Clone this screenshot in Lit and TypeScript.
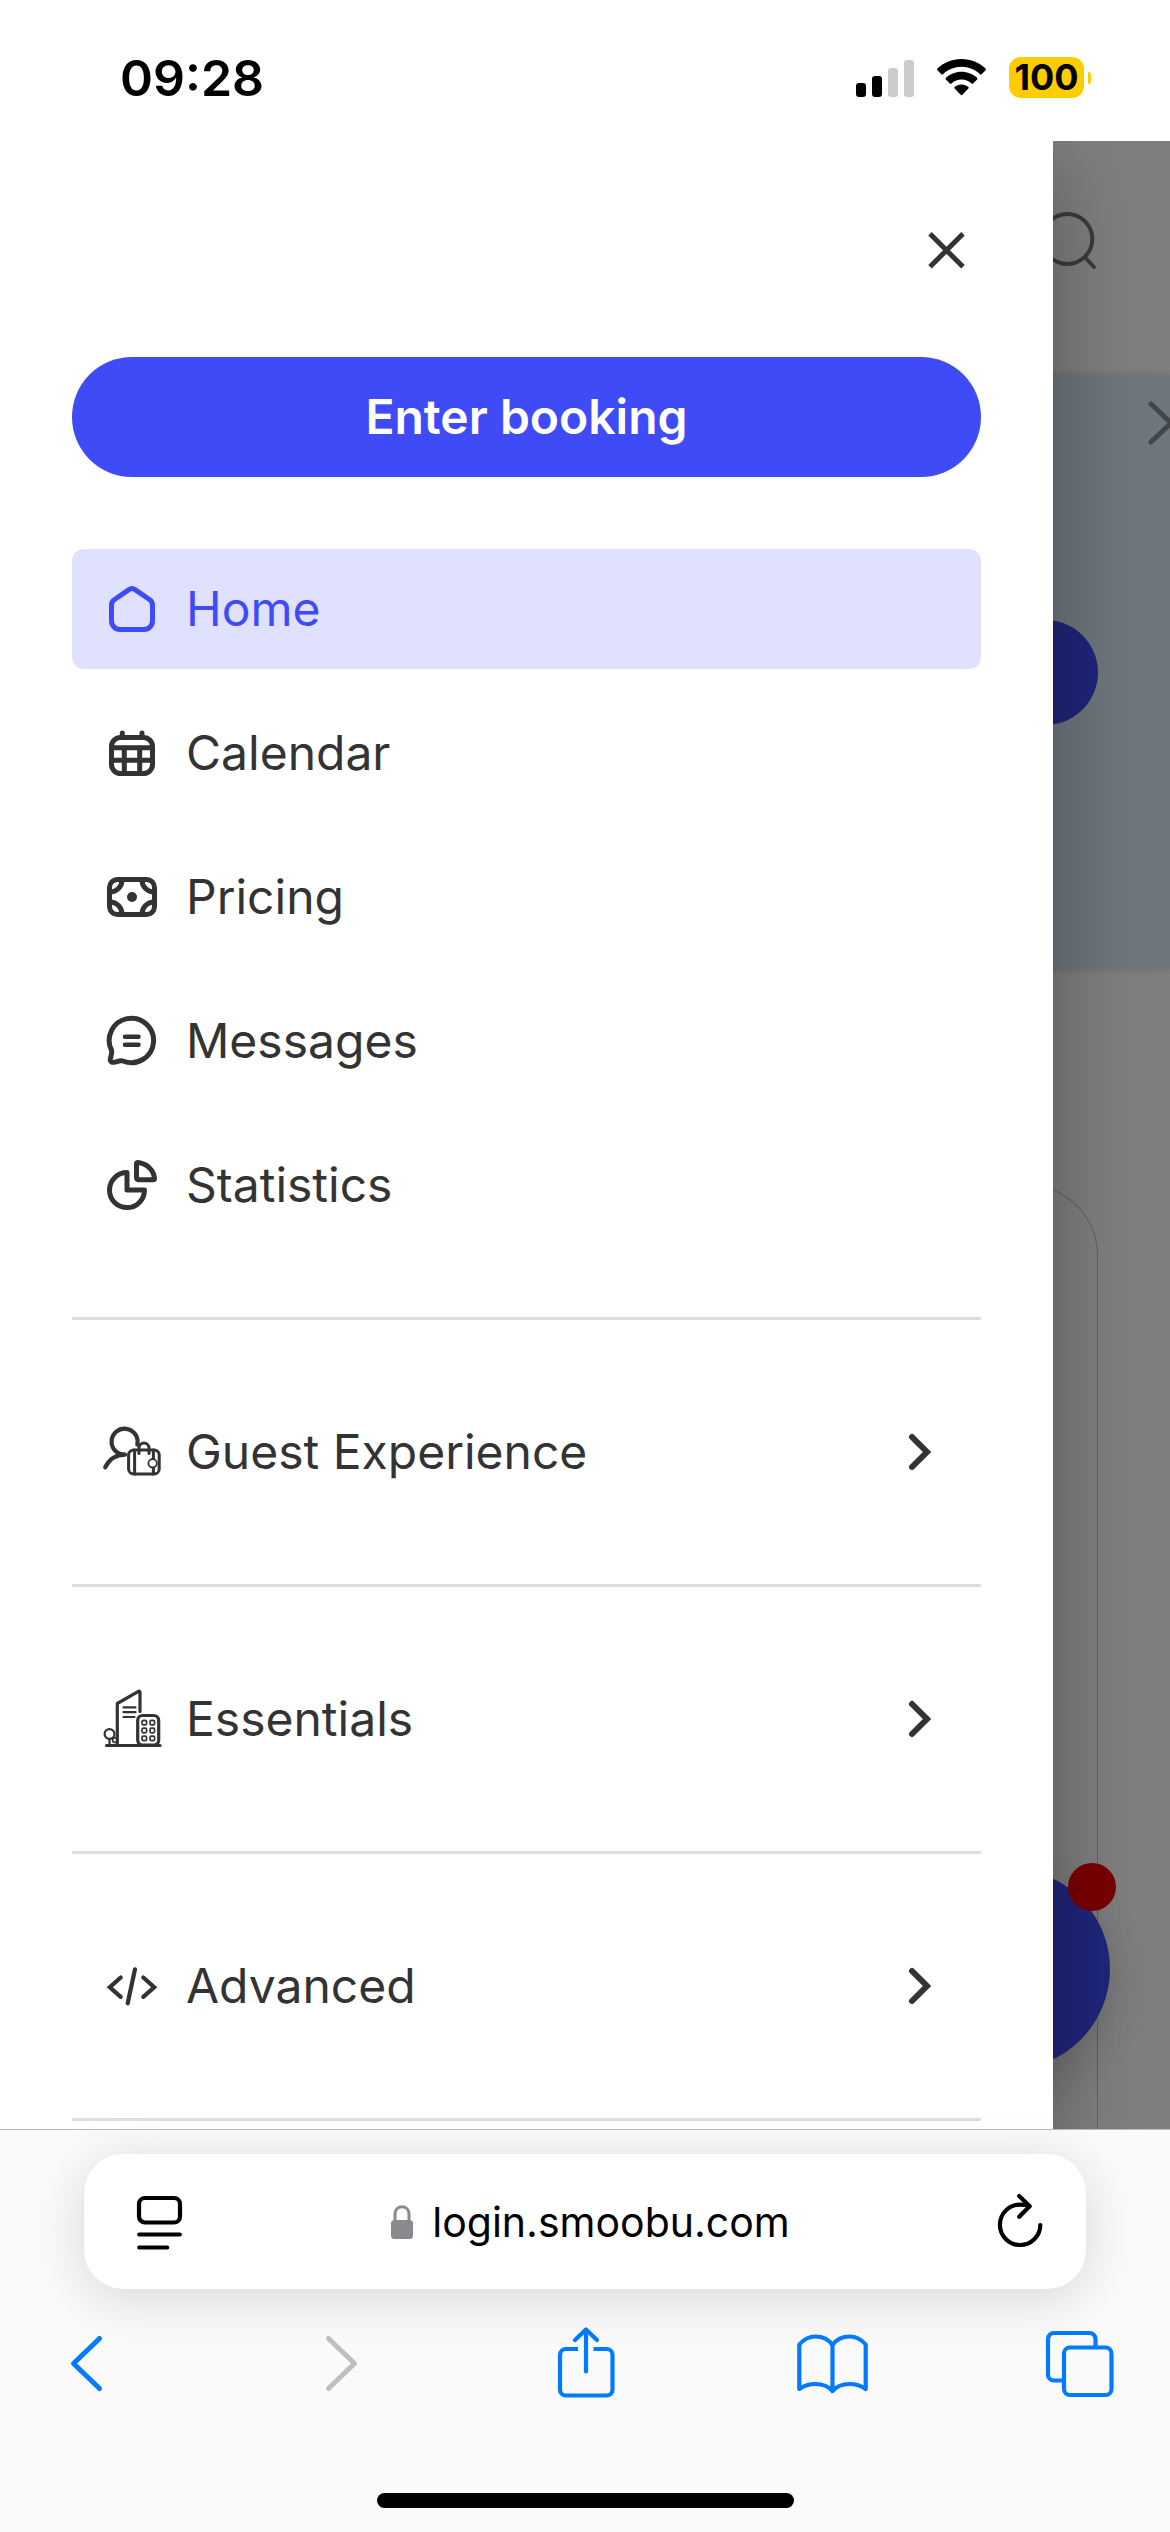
import { LitElement, html, css, svg } from "lit";
import type { SVGTemplateResult } from "lit";
import { customElement, property, state } from "lit/decorators.js";
import { classMap } from "lit/directives/class-map.js";

const menuIcons: Record<string, SVGTemplateResult> = {
  home: svg`<path stroke-width="5" d="M27 10.6a5 5 0 0 1 6 0L47.5 20.5a6.500 6.500 0 0 1 3 5.500V42a8.500 8.500 0 0 1-8.500 8.500H18A8.500 8.500 0 0 1 9.500 42V26a6.500 6.500 0 0 1 3-5.500Z"/>`,
  calendar: svg`<g stroke-width="5"><rect x="9.5" y="14.5" width="41" height="36" rx="9"/>
    <path d="M20.300 10v4M40 10v4M10 24.700h40M10 37.300h40M22.300 25v25M37.700 25v25"/></g>`,
  pricing: svg`<g stroke-width="5"><rect x="7.5" y="12.5" width="45" height="35" rx="8"/>
    <path d="M20 13a12 12 0 0 1-12 12M40 13a12 12 0 0 0 12 12M20 47a12 12 0 0 0-12-12M40 47a12 12 0 0 1 12-12"/></g>
    <circle cx="30" cy="30" r="5" fill="currentColor" stroke="none"/>`,
  messages: svg`<path stroke-width="5" d="M21 50c-2.500-1-4-.2-7 .9-4.200 1.200-6.500 0-5.500-3.700.6-2.500 1.500-4.400 1.100-7.700A22.200 22.200 0 1 1 21 50Z"/>
    <path stroke-width="4.600" d="M23 25.700h13.500M23 33.700h13.500"/>`,
  statistics: svg`<path stroke-width="5" d="M34.500 8.800c0-1 .6-1.500 1.500-1.300C45 8.500 51.700 15 52.500 23.500c0 .8-.4 1.300-1.200 1.300H36.500a2 2 0 0 1-2-2Z"/>
    <path stroke-width="5" d="M25 17.600A17.500 17.500 0 1 0 42.500 35H25Z"/>`,
  guest: svg`<path stroke-width="4.200" d="M35.300 22.500A13 13 0 1 0 23 32.700C14 32.700 7 38 3.200 45.300"/>
    <g stroke-width="3"><rect x="26.6" y="28" width="30.600" height="24" rx="5"/>
    <path d="M32.600 28v24M37 31.500V26a5 5 0 0 1 10 0v5.500M51.400 28v24" /></g>
    <circle cx="50.600" cy="41.300" r="4.200" stroke-width="1.800" fill="#fff"/>`,
  essentials: svg`<g stroke-width="3.200"><path d="M15.300 56V14.500L36.500 2.300q1.500-.6 1.500 1V22.500"/>
    <path d="M4.500 56.500h53.500"/><rect x="35.700" y="26.500" width="21" height="29.500" rx="5"/></g>
    <path stroke-width="2.200" d="M21.500 18.300h12M21.500 23.200h12M21.500 28h11"/>
    <g stroke-width="1.700"><rect x="40" y="31.300" width="4.600" height="4.600" rx="1.500"/><rect x="48" y="31.300" width="4.600" height="4.600" rx="1.500"/>
    <rect x="40" y="39.200" width="4.600" height="4.600" rx="1.500"/><rect x="48" y="39.200" width="4.600" height="4.600" rx="1.500"/>
    <rect x="40" y="47.100" width="4.600" height="4.600" rx="1.500"/><rect x="48" y="47.100" width="4.600" height="4.600" rx="1.500"/>
    <circle cx="13" cy="51" r="2.400"/></g>
    <g stroke-width="2.200"><circle cx="7.500" cy="45" r="4.900" fill="#fff"/><path d="M7.500 50v6"/></g>`,
  advanced: svg`<path stroke-width="4.200" stroke-linejoin="miter" d="M18.700 21.500 7.800 31.300l10.900 9.500M41.300 21.500l10.900 9.800-10.900 9.500M33 13.300l-7.300 34"/>`,
};

const toolbarIcons: Record<string, SVGTemplateResult> = {
  back: svg`<path stroke-width="5" d="M48.500 13.500 22.500 38.500l26 25"/>`,
  forward: svg`<path stroke-width="5" d="M29.500 13.500l26 25-26 25"/>`,
  share: svg`<path stroke-linecap="butt" d="M30 24H18a6 6 0 0 0-6 6v34.500a6 6 0 0 0 6 6h40.500a6 6 0 0 0 6-6V30a6 6 0 0 0-6-6h-13"/>
    <path d="M38 46.500V4.500M27 15 38 4.500 49 15"/>`,
  book: svg`<path d="M3.300 19.500V64c4.700-3.400 9.700-5 16.200-5 7.500 0 13.500 3 17 7 3.500-4 9.500-7 17-7 6.500 0 11.500 1.600 16.200 5V19.500c-4.700-5.500-9.700-8-16.200-8-7.500 0-13.500 3.500-17 8.500-3.500-5-9.500-8.500-17-8.500-6.500 0-11.500 2.500-16.200 8ZM36.500 20v45"/>`,
  tabs: svg`<path stroke-linecap="butt" d="M51.500 22v-8a6 6 0 0 0-6-6H10a6 6 0 0 0-6 6v35.500a6 6 0 0 0 6 6h9"/>
    <rect x="20" y="22.500" width="47.500" height="47.500" rx="6"/>`,
};

interface MenuEntry {
  id: string;
  label: string;
}

const primary: MenuEntry[] = [
  { id: "home", label: "Home" },
  { id: "calendar", label: "Calendar" },
  { id: "pricing", label: "Pricing" },
  { id: "messages", label: "Messages" },
  { id: "statistics", label: "Statistics" },
];

const groups: MenuEntry[] = [
  { id: "guest", label: "Guest Experience" },
  { id: "essentials", label: "Essentials" },
  { id: "advanced", label: "Advanced" },
];

const reset = css`
  :host, *, *::before, *::after { box-sizing: border-box; }
  button { margin: 0; padding: 0; border: 0; background: none; color: inherit; font: inherit; cursor: pointer; }
  svg { display: block; flex: none; fill: none; stroke: currentColor; stroke-linecap: round; stroke-linejoin: round; overflow: visible; }
`;

@customElement("status-bar")
export class StatusBar extends LitElement {
  static styles = [reset, css`
    :host {
      display: flex; align-items: center; justify-content: space-between;
      height: 141px; padding: 14px 79px 0 120px;
      background: #fff; color: #000;
      font-family: Inter, "Liberation Sans", sans-serif;
    }
    .time { font-size: 50px; line-height: 60px; font-weight: 600; }
    .indicators { display: flex; align-items: center; gap: 23px; }
    .signal, .wifi { fill: currentColor; stroke: none; }
    .battery { display: flex; align-items: center; gap: 4px; }
    .level {
      width: 75px; height: 41px; border-radius: 12px; background: #fc0;
      font-size: 36px; line-height: 41px; font-weight: 700; text-align: center;
    }
    .nub { width: 3px; height: 12px; border-radius: 0 3px 3px 0; background: #fc0; }
  `];

  render() {
    return html`
      <span class="time">09:28</span>
      <div class="indicators">
        <svg class="signal" width="58" height="38" viewBox="0 0 58 38" aria-hidden="true">
          <rect x="0" y="24" width="10" height="14" rx="3"/><rect x="16" y="17" width="10" height="21" rx="3"/>
          <g fill="#ccc"><rect x="32" y="9" width="10" height="29" rx="3"/><rect x="48" y="1" width="10" height="37" rx="3"/></g>
        </svg>
        <svg class="wifi" width="49" height="37" viewBox="0 0 49 37" aria-hidden="true">
          <path d="M24.500 0C34 0 42.500 3.700 48.600 9.600q.8.800 0 1.600l-4 4q-.8.800-1.600 0C38 10.600 31.600 7.800 24.500 7.800S11 10.600 6 15.200q-.8.800-1.600 0l-4-4q-.8-.8 0-1.600C6.500 3.700 15 0 24.500 0Z"/>
          <path d="M24.500 12.700c6 0 11.500 2.300 15.600 6.100q.8.800 0 1.600l-4 4q-.8.800-1.600 0a14.800 14.800 0 0 0-20 0q-.8.800-1.600 0l-4-4q-.8-.8 0-1.600c4.100-3.800 9.600-6.100 15.600-6.100Z"/>
          <path d="M24.500 25.400c2.600 0 5 1 6.900 2.600q.8.800 0 1.600l-6 6.100q-.9.900-1.800 0l-6-6.100q-.8-.8 0-1.600c1.900-1.600 4.300-2.600 6.900-2.600Z"/>
        </svg>
        <div class="battery"><span class="level">100</span><span class="nub"></span></div>
      </div>
    `;
  }
}

@customElement("dashboard-backdrop")
export class DashboardBackdrop extends LitElement {
  static styles = [reset, css`
    :host { display: flex; flex-direction: column; position: relative; background: #fff; color: #777; overflow: hidden; }
    .header { display: flex; justify-content: flex-end; align-items: center; height: 234px; padding: 0 72px 38px 0; }
    .banner {
      display: flex; flex-direction: column; align-items: flex-end;
      height: 594px; padding-top: 24px; background: #daeef8;
      box-shadow: 0 0 9px rgba(0, 0, 0, 0.15);
    }
    .next { margin-right: -6px; color: #868e92; }
    .action { width: 60%; height: 105px; margin: 173px 72px 0 0; border-radius: 53px; background: #3e4bf7; }
    .card { flex: 1; margin: 215px 72px 0; border: 1px solid #c4c4c4; border-bottom: 0; border-radius: 72px 72px 0 0; }
    .chat {
      position: absolute; right: 60px; bottom: 60px; width: 200px; height: 200px;
      border-radius: 50%; background: #3e4bf7; box-shadow: 0 12px 48px rgba(0, 0, 0, 0.16);
    }
    .unread { position: absolute; right: -6px; top: -6px; width: 48px; height: 48px; border-radius: 50%; background: #f50000; }
    .scrim { position: absolute; inset: 0; background: rgba(0, 0, 0, 0.5); }
  `];

  render() {
    return html`
      <div class="header">
        <svg width="60" height="60" viewBox="0 0 60 60" stroke-width="4" aria-hidden="true">
          <circle cx="29.300" cy="30" r="25"/><path d="M48 49.500l8 8.500"/>
        </svg>
      </div>
      <div class="banner">
        <svg class="next" width="30" height="48" viewBox="0 0 30 48" stroke-width="5" aria-hidden="true"><path d="M5 5l20 19L5 43"/></svg>
        <div class="action"></div>
      </div>
      <div class="card"></div>
      <div class="chat"><span class="unread"></span></div>
      <div class="scrim"></div>
    `;
  }
}

@customElement("side-menu")
export class SideMenu extends LitElement {
  @state() private current = "home";

  static styles = [reset, css`
    :host {
      display: block; width: 90%; padding: 72px 72px 8px; background: #fff; color: #333;
      box-shadow: 0 24px 84px rgba(0, 0, 0, 0.33);
      font-family: Inter, "Liberation Sans", sans-serif; font-size: 48px; line-height: 60px;
    }
    .top { display: flex; justify-content: flex-end; margin-bottom: 72px; }
    .booking {
      display: block; width: 100%; height: 120px; margin-bottom: 72px;
      border-radius: 60px; background: #3f4bf7; color: #fff; font-weight: 600; text-align: center;
    }
    ul { list-style: none; margin: 0; padding: 0; }
    .primary { display: flex; flex-direction: column; gap: 24px; padding-bottom: 72px; }
    .row {
      display: flex; align-items: center; gap: 24px; width: 100%; height: 120px;
      padding: 0 42px 0 30px; border-radius: 12px; color: inherit; text-decoration: none; text-align: left;
    }
    .label { flex: 1; }
    .active { background: #e0e0ff; color: #3f4bf7; }
    .groups { border-bottom: 3px solid #dedede; }
    .group { padding: 72px 0; border-top: 3px solid #dedede; }
  `];

  private icon(id: string) {
    return html`<svg width="60" height="60" viewBox="0 0 60 60" aria-hidden="true">${menuIcons[id]}</svg>`;
  }

  render() {
    return html`
      <div class="top">
        <button aria-label="Close menu">
          <svg width="72" height="72" viewBox="0 0 72 72" stroke-width="5"><path stroke-linecap="butt" d="M21 20.800l33 33M54 20.800l-33 33"/></svg>
        </button>
      </div>
      <button class="booking">Enter booking</button>
      <nav>
        <ul class="primary">
          ${primary.map((item) => html`
            <li>
              <a href="#${item.id}" class=${classMap({ row: true, active: item.id === this.current })}
                @click=${() => (this.current = item.id)}>
                ${this.icon(item.id)}<span class="label">${item.label}</span>
              </a>
            </li>`)}
        </ul>
        <ul class="groups">
          ${groups.map((item) => html`
            <li class="group">
              <button class="row" aria-expanded="false">
                ${this.icon(item.id)}<span class="label">${item.label}</span>
                <svg width="36" height="48" viewBox="0 0 36 48" stroke-width="6" aria-hidden="true"><path stroke-linejoin="miter" d="M9 9l15 15-15 15"/></svg>
              </button>
            </li>`)}
        </ul>
      </nav>
    `;
  }
}

@customElement("browser-bar")
export class BrowserBar extends LitElement {
  @property() address = "";

  static styles = [reset, css`
    :host {
      display: block; position: relative; padding: 24px 0; border-top: 1px solid #bababa; background: #fafafa;
      font-family: Inter, "Liberation Sans", sans-serif;
    }
    .address {
      display: flex; align-items: center; justify-content: space-between;
      height: 135px; margin: 0 84px 36px; padding: 0 42px 0 52px;
      border-radius: 39px; background: #fff; color: #000; box-shadow: 0 9px 54px rgba(0, 0, 0, 0.14);
    }
    .site { display: flex; align-items: center; gap: 18px; font-size: 41px; line-height: 54px; }
    .lock { color: #8a8a8e; }
    .tools { display: flex; justify-content: space-between; padding: 0 54px 0 51px; margin-bottom: 96px; color: #007aff; }
    .tools button:disabled { color: #bfbfbf; }
    .handle { width: 417px; height: 15px; margin: 0 auto; border-radius: 8px; background: #000; }
  `];

  private tool(id: string, label: string, disabled = false) {
    return html`<button aria-label=${label} ?disabled=${disabled}>
      <svg width="72" height="72" viewBox="0 0 72 72" stroke-width="4.200">${toolbarIcons[id]}</svg>
    </button>`;
  }

  render() {
    return html`
      <div class="address">
        <button aria-label="Page settings">
          <svg width="48" height="60" viewBox="0 0 48 60" stroke-width="4.200">
            <rect x="3" y="6" width="41" height="24.500" rx="6"/><path d="M3.200 42.500h40.600M3.200 55.500h28"/>
          </svg>
        </button>
        <button class="site">
          <svg class="lock" width="24" height="36" viewBox="0 0 24 36" aria-hidden="true">
            <rect x="1" y="16" width="22" height="19" rx="3.500" fill="currentColor" stroke="none"/>
            <path stroke-width="3" d="M5 17v-6.500C5 0 19 0 19 10.500V17"/>
          </svg>
          <span>${this.address}</span>
        </button>
        <button aria-label="Reload">
          <svg width="48" height="60" viewBox="0 0 48 60" stroke-width="4.200">
            <path d="M44.300 33A20.200 20.200 0 1 1 24.300 12.600q5 0 9 1.600M23.200 4l10.500 10.300-10.500 10.500"/>
          </svg>
        </button>
      </div>
      <div class="tools">
        ${this.tool("back", "Back")}
        ${this.tool("forward", "Forward", true)}
        ${this.tool("share", "Share")}
        ${this.tool("book", "Bookmarks")}
        ${this.tool("tabs", "Tabs")}
      </div>
      <div class="handle"></div>
    `;
  }
}

@customElement("app-root")
export class AppRoot extends LitElement {
  static styles = css`
    :host { display: flex; flex-direction: column; min-height: 100vh; background: #fff; }
    .stage { flex: 1; display: grid; grid-template-columns: 100%; overflow: hidden; }
    .stage > * { grid-area: 1 / 1; }
    .menu { position: relative; }
  `;

  render() {
    return html`
      <status-bar></status-bar>
      <main class="stage">
        <dashboard-backdrop></dashboard-backdrop>
        <side-menu class="menu"></side-menu>
      </main>
      <browser-bar address="login.smoobu.com"></browser-bar>
    `;
  }
}
